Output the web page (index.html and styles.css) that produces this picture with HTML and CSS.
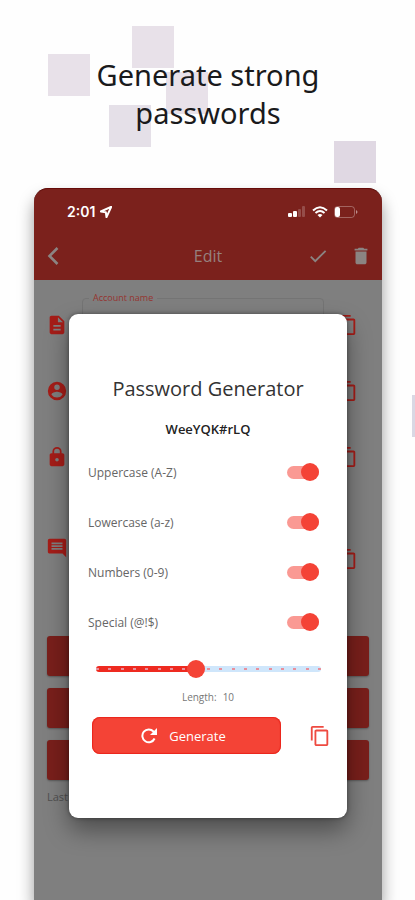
FILE: index.html
```html
<!DOCTYPE html>
<html lang="en">
<head>
<meta charset="utf-8">
<meta name="viewport" content="width=device-width, initial-scale=1">
<title>Generate strong passwords</title>
<link rel="stylesheet" href="styles.css">
</head>
<body>
<svg class="defs" aria-hidden="true">
  <symbol id="copy" viewBox="0 0 24 24"><path d="M16 1H4C2.900 1 2 1.900 2 3v14h2V3h12V1zm3 4H8C6.900 5 6 5.900 6 7v14c0 1.100.900 2 2 2h11c1.100 0 2-.900 2-2V7c0-1.100-.900-2-2-2zm0 16H8V7h11v14z"/></symbol>
</svg>
<div class="page">
  <div class="squares" aria-hidden="true">
    <i class="square s1"></i><i class="square s2"></i><i class="square s3"></i>
    <i class="square s4"></i><i class="square s5"></i><i class="square s6"></i>
  </div>
  <h1 class="headline">Generate strong<br>passwords</h1>

  <main class="phone">
    <header class="top">
      <div class="status">
        <span class="clock">2:01
          <svg width="12" height="12" viewBox="0 0 12 12"><path d="M11.200.800.800 5.500l5 .700.700 5z" fill="none" stroke="currentColor" stroke-width="2" stroke-linejoin="round"/></svg>
        </span>
        <span class="signals">
          <svg width="18" height="12" viewBox="0 0 18 12"><rect x="0" y="7" width="4" height="4" rx="1"/><rect x="5" y="5" width="4" height="6" rx="1"/><rect x="10" y="3" width="3" height="8" rx="1" opacity=".2"/><rect x="14" y="0" width="3" height="11" rx="1" opacity=".2"/></svg>
          <svg width="16" height="12" viewBox="0 0 16 12"><g fill="none" stroke="currentColor" stroke-width="2"><path d="M1 4.500q7-6.500 14 0"/><path d="M3.500 7q4.500-4 9 0"/></g><path d="M5.500 9q2.500-2 5 0L8 11.500z"/></svg>
          <svg width="24" height="12" viewBox="0 0 24 12"><rect x=".5" y=".5" width="20" height="11" rx="3" fill="none" stroke="currentColor" opacity=".3"/><rect x="1" y="1" width="5" height="10" rx="2"/><path d="M22 4v4q3-2 0-4" opacity=".5"/></svg>
        </span>
      </div>
      <nav class="bar">
        <button class="tool back" aria-label="Back"><svg width="12" height="20" viewBox="0 0 12 20"><path d="M10.500 2 2.500 10l8 8" fill="none" stroke="currentColor" stroke-width="2.600"/></svg></button>
        <h2 class="bar-title">Edit</h2>
        <div class="actions">
          <button class="tool" aria-label="Save"><svg width="22" height="22" viewBox="0 0 24 24"><path d="M9 16.200 4.800 12l-1.400 1.400L9 19 21 7l-1.400-1.400z"/></svg></button>
          <button class="tool" aria-label="Delete"><svg width="22" height="22" viewBox="0 0 24 24"><path d="M6 19c0 1.100.900 2 2 2h8c1.100 0 2-.900 2-2V7H6zM19 4h-3.500l-1-1h-5l-1 1H5v2h14z"/></svg></button>
        </div>
      </nav>
    </header>

    <section class="form">
      <div class="row">
        <svg class="icon" viewBox="0 0 24 24"><path fill-rule="evenodd" d="M14 2H6c-1.100 0-2 .900-2 2v16c0 1.100.900 2 2 2h12c1.100 0 2-.900 2-2V8zm2 16H8v-2h8zm0-4H8v-2h8zm-3-5V3.500L18.500 9z"/></svg>
        <fieldset class="field"><legend>Account name</legend></fieldset>
        <svg class="icon" viewBox="0 0 24 24"><use href="#copy"/></svg>
      </div>
      <div class="row">
        <svg class="icon" viewBox="0 0 24 24"><path fill-rule="evenodd" d="M12 2a10 10 0 1 0 0 20 10 10 0 0 0 0-20zm0 3a3 3 0 1 1 0 6 3 3 0 0 1 0-6zm0 14.200a7.200 7.200 0 0 1-6-3.200c0-2 4-3.100 6-3.100s6 1.100 6 3.100a7.200 7.200 0 0 1-6 3.200z"/></svg>
        <span></span>
        <svg class="icon" viewBox="0 0 24 24"><use href="#copy"/></svg>
      </div>
      <div class="row">
        <svg class="icon" viewBox="0 0 24 24"><path fill-rule="evenodd" d="M18 8h-1V6A5 5 0 0 0 7 6v2H6c-1.100 0-2 .900-2 2v10c0 1.100.900 2 2 2h12c1.100 0 2-.900 2-2V10c0-1.100-.900-2-2-2zm-6 9a2 2 0 1 1 0-4 2 2 0 0 1 0 4zm3.100-9H8.900V6a3.100 3.100 0 0 1 6.200 0z"/></svg>
        <span></span>
        <svg class="icon" viewBox="0 0 24 24"><use href="#copy"/></svg>
      </div>
      <div class="row notes">
        <svg class="icon" viewBox="0 0 24 24"><path fill-rule="evenodd" d="M22 4c0-1.100-.900-2-2-2H4c-1.100 0-2 .900-2 2v12c0 1.100.900 2 2 2h14l4 4zm-4 10H6v-2h12zm0-3H6V9h12zm0-3H6V6h12z"/></svg>
        <span></span>
        <svg class="icon lower" viewBox="0 0 24 24"><use href="#copy"/></svg>
      </div>
      <div class="blocks"><div class="block"></div><div class="block"></div><div class="block"></div></div>
      <p class="last">Last</p>
    </section>

    <section class="dialog" role="dialog" aria-labelledby="dialog-title">
      <h2 class="dialog-title" id="dialog-title">Password Generator</h2>
      <output class="password">WeeYQK#rLQ</output>
      <div class="options">
        <label class="option">Uppercase (A-Z)<input class="switch" type="checkbox" checked></label>
        <label class="option">Lowercase (a-z)<input class="switch" type="checkbox" checked></label>
        <label class="option">Numbers (0-9)<input class="switch" type="checkbox" checked></label>
        <label class="option">Special (@!$)<input class="switch" type="checkbox" checked></label>
      </div>
      <div class="slider"><input id="length" type="range" min="2" max="20" value="10"></div>
      <label class="length" for="length"><span>Length:</span><span>10</span></label>
      <div class="footer">
        <button class="generate"><svg width="16" height="16" viewBox="0 0 16 16"><path d="M13.600 10.500A6.400 6.400 0 1 1 12.500 3.500L14 5" fill="none" stroke="currentColor" stroke-width="2"/><path d="M16 0v7H9z"/></svg>Generate</button>
        <button class="copy" aria-label="Copy password"><svg width="22" height="22" viewBox="0 0 24 24"><use href="#copy"/></svg></button>
      </div>
    </section>
  </main>
</div>
</body>
</html>
```
FILE: styles.css
```css
* { box-sizing: border-box; }
body {
  margin: 0;
  background: #fefefe;
  color: #1a1a1c;
  font-family: "Open Sans", sans-serif;
}
h1, h2, p { margin: 0; font-weight: 400; }
button { border: 0; padding: 0; background: none; color: inherit; font: inherit; }
svg { display: block; fill: currentColor; }
.defs { position: absolute; width: 0; height: 0; }
.page {
  position: relative;
  display: flex;
  flex-direction: column;
  min-height: 100vh;
  padding: 56px 33px 0 34px;
  overflow: hidden;
}

/* Decorative squares scattered behind the headline */
.square { position: absolute; width: 42px; height: 42px; background: #e8e1e9; }
.s1 { left: 48px; top: 54px; }
.s2 { left: 132px; top: 26px; }
.s3 { left: 166px; top: 72px; }
.s4 { left: 109px; top: 105px; background: #e5e0e8; }
.s5 { left: 334px; top: 141px; background: #e0d8e3; }
.s6 { left: 412px; top: 395px; background: #d9d8e4; }
.headline {
  position: relative;
  font-family: "Noto Sans", sans-serif;
  font-size: 29px;
  line-height: 38px;
  text-align: center;
}

.phone {
  position: relative;
  flex: 1;
  margin-top: 56px;
  background: #7f7f7f;
  border-radius: 14px 14px 0 0;
  box-shadow: 0 10px 16px rgba(0, 0, 0, .4);
}
.top { background: #7b211c; border-radius: 14px 14px 0 0; border-top: 1px solid #650b09; }
.status {
  display: flex;
  justify-content: space-between;
  align-items: center;
  height: 46px;
  padding: 0 24px 0 33px;
  color: #fff;
}
.clock { display: flex; align-items: center; gap: 5px; font: 600 14px/20px Inter, sans-serif; }
.signals { display: flex; align-items: center; gap: 6px; }
.bar {
  display: grid;
  grid-template-columns: 1fr auto 1fr;
  align-items: center;
  height: 45px;
  padding: 0 10px 3px;
  color: #8b8482;
}
.bar-title { font-size: 16px; line-height: 24px; color: #96807e; }
.back { justify-self: start; padding-left: 3px; }
.actions { display: flex; justify-content: flex-end; gap: 21px; }

.form { padding: 12px 13px; }
.row {
  display: grid;
  grid-template-columns: 22px 1fr 22px;
  column-gap: 12px;
  align-items: center;
  height: 66px;
  margin: 0 11px 0 -1px;
  color: #a51d18;
}
.icon { width: 22px; height: 22px; }
.notes { height: 116px; }
.lower { margin-top: 22px; }
.field { align-self: stretch; margin: 0 0 12px 2px; padding: 0 6px; border: 1px solid #747474; border-radius: 4px; min-width: 0; }
.field legend { padding: 0 4px; font-size: 9px; line-height: 12px; color: #96342f; }
.blocks { display: grid; gap: 12px; margin-top: 30px; }
.block { height: 40px; border-radius: 3px; background: #791f1b; box-shadow: 0 1px 2px rgba(0, 0, 0, .3); }
.last { margin-top: 8px; font-size: 11px; line-height: 18px; color: #505050; }

/* Modal floats over the dimmed form */
.dialog {
  position: absolute;
  top: 126px;
  left: 35px;
  right: 35px;
  padding: 60px 16px 64px;
  background: #fff;
  border-radius: 9px;
  box-shadow: 0 12px 24px rgba(0, 0, 0, .4), 0 0 4px rgba(0, 0, 0, .4);
}
.dialog-title { font-size: 20px; line-height: 30px; text-align: center; color: #333; }
.password { display: block; margin-top: 15px; font-size: 13px; font-weight: 600; line-height: 20px; text-align: center; color: #222; }
.options { margin-top: 8px; }
.option { display: flex; align-items: center; justify-content: space-between; height: 50px; padding: 0 12px 0 3px; font-size: 12px; color: #666; }
.switch {
  appearance: none;
  display: flex;
  align-items: center;
  justify-content: flex-end;
  width: 32px;
  height: 13px;
  margin: 0;
  border-radius: 7px;
  background: #fa9993;
}
.switch::before { content: ""; flex: none; width: 18px; height: 18px; border-radius: 50%; background: #f44336; }
.switch:not(:checked) { justify-content: flex-start; }
.slider { position: relative; height: 20px; margin: 12px 2px 0 3px; }
.slider::before {
  content: "";
  position: absolute;
  inset: 7px 8px;
  border-radius: 3px;
  background:
    repeating-linear-gradient(90deg, #e88f9b 0 3px, transparent 3px calc((100% - 3px) / 18)) 0 2px / 100% 2px no-repeat,
    linear-gradient(90deg, #ee2a20 44%, #cfe6fb 44%);
}
.slider input { appearance: none; position: relative; display: block; width: 100%; height: 20px; margin: 0; background: none; }
.slider input::-webkit-slider-thumb { appearance: none; width: 18px; height: 18px; border-radius: 50%; background: #f44336; }
.length { display: flex; justify-content: center; gap: 6px; margin-top: 10px; font-size: 10px; line-height: 16px; color: #777; }
.footer { display: flex; align-items: center; gap: 28px; margin-top: 12px; padding-left: 7px; }
.generate {
  flex: 1;
  display: flex;
  align-items: center;
  justify-content: center;
  gap: 12px;
  height: 37px;
  padding-right: 6px;
  border-radius: 8px;
  background: #f44336;
  box-shadow: inset 0 0 1px 1px #ea251b;
  color: #fff;
  font-size: 13px;
}
.copy { color: #ee4a40; }
```
